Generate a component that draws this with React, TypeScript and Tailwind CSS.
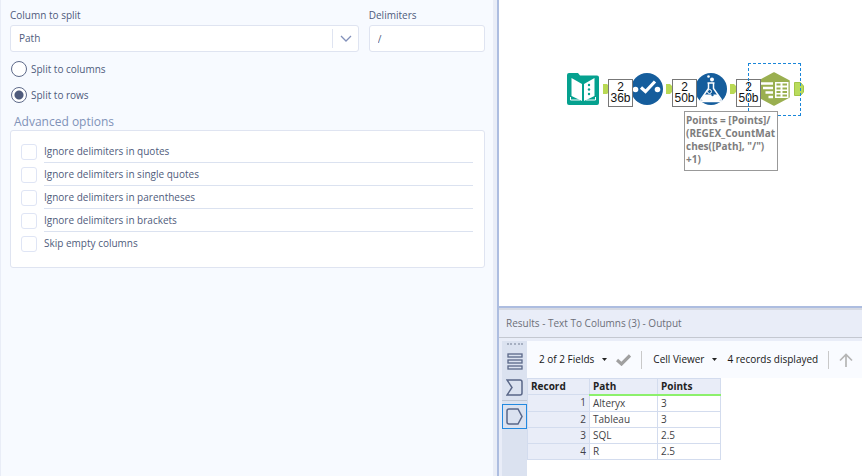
import React, { useState } from "react";

const advancedOptions = [
  "Ignore delimiters in quotes",
  "Ignore delimiters in single quotes",
  "Ignore delimiters in parentheses",
  "Ignore delimiters in brackets",
  "Skip empty columns",
];

const records = [
  { path: "Alteryx", points: "3" },
  { path: "Tableau", points: "3" },
  { path: "SQL", points: "2.5" },
  { path: "R", points: "2.5" },
];

const InputToolIcon = () => (
  <svg width="32" height="32" viewBox="0 0 32 32">
    <path d="M2 0H11L13 2.500H30Q32 2.500 32 4.500V30Q32 32 30 32H2Q0 32 0 30V2Q0 0 2 0Z" fill="#05a18f" />
    <path d="M4.500 5L15 11V28L4.500 23Z" fill="#fff" />
    <path d="M27.500 5L17 11V28L27.500 23Z" fill="#fff" />
    <path d="M3.500 24V27H13M28.500 24V27H19" fill="none" stroke="#fff" strokeWidth="1" />
    <g fill="#05a18f">
      <circle cx="22" cy="12" r="1.200" />
      <circle cx="22" cy="16.500" r="1.200" />
      <circle cx="22" cy="21" r="1.200" />
    </g>
  </svg>
);

const SelectToolIcon = () => (
  <svg width="32" height="32" viewBox="0 0 32 32">
    <circle cx="16" cy="16" r="16" fill="#155d9c" />
    <circle cx="4.500" cy="16.500" r="2.800" fill="#fff" />
    <circle cx="26.500" cy="16.500" r="2.800" fill="#fff" />
    <path d="M10 14.500L14.500 18.500L24 8.500" fill="none" stroke="#fff" strokeWidth="3.200" />
  </svg>
);

const FormulaToolIcon = () => (
  <svg width="32" height="32" viewBox="0 0 32 32">
    <circle cx="16" cy="16" r="16" fill="#155d9c" />
    <path d="M12.500 10H19.500M13.500 10V15.500L6 26Q5 28.500 8 28.500H24Q27 28.500 26 26L18.500 15.500V10" fill="none" stroke="#fff" strokeWidth="1.500" />
    <path d="M9.500 21.500H22.500L25.500 26Q26 28 24 28H8Q6 28 6.500 26Z" fill="#fff" />
    <circle cx="14.500" cy="18.500" r="2" fill="#155d9c" stroke="#fff" strokeWidth="1" />
    <circle cx="17.500" cy="22" r="1.200" fill="#155d9c" />
    <circle cx="13.500" cy="3.500" r="1.300" fill="#fff" />
    <circle cx="17" cy="6.500" r="2" fill="#fff" />
  </svg>
);

const TextToColumnsIcon = () => (
  <svg width="32" height="34" viewBox="0 0 32 34">
    <path d="M16 1L31 9V25L16 33L1 25V9Z" fill="#9aaf50" stroke="#9aaf50" strokeWidth="1.500" strokeLinejoin="round" />
    <path d="M2.500 11.500H15M5 16H15M7.500 20.500H15M10.500 25H15" stroke="#fff" strokeWidth="2.500" />
    <rect x="17" y="10" width="13.500" height="16" fill="#fff" />
    <path d="M18.500 12.500H22.500M24.500 12.500H29M18.500 16.500H22.500M24.500 16.500H29M18.500 20H22.500M24.500 20H29M18.500 23.500H22.500M24.500 23.500H29" stroke="#9aaf50" strokeWidth="2" />
  </svg>
);

const Anchor = ({ className }: { className: string }) => (
  <svg className={`absolute ${className}`} width="6" height="10" viewBox="0 0 6 10">
    <path d="M0 0H4L6 2V8L4 10H0Z" fill="#b9d954" />
  </svg>
);

const Badge = ({ className, size }: { className: string; size: string }) => (
  <div
    className={`absolute flex h-7 w-[25px] flex-col items-center justify-center border border-[#777] bg-white font-['Liberation_Sans',sans-serif] text-xs leading-[11px] text-[#111] ${className}`}
  >
    <span>2</span>
    <span>{size}</span>
  </div>
);

const WorkflowCanvas = () => (
  <div className="relative h-[306px] overflow-hidden bg-white">
    <div className="absolute left-[68px] top-[73px]">
      <InputToolIcon />
    </div>
    <Anchor className="left-[104px] top-[84px]" />
    <div className="absolute left-[132px] top-[73px]">
      <SelectToolIcon />
    </div>
    <Badge className="left-[109px] top-[79px]" size="36b" />
    <Anchor className="left-[167px] top-[84px]" />
    <div className="absolute left-[196px] top-[73px]">
      <FormulaToolIcon />
    </div>
    <Badge className="left-[173px] top-[79px]" size="50b" />
    <Anchor className="left-[231px] top-[84px]" />
    <div className="absolute left-[259px] top-[72px]">
      <TextToColumnsIcon />
    </div>
    <Badge className="left-[237px] top-[79px]" size="50b" />
    <svg className="absolute left-[295px] top-[82px]" width="10" height="14" viewBox="0 0 10 14">
      <path d="M0.500 0.500H6.500L9.500 4V10L6.500 13.500H0.500Z" fill="#b9dc5c" stroke="#a3c447" />
    </svg>
    <div className="absolute left-[249px] top-[63px] h-[53px] w-[53px] border border-dashed border-[#1a86d9]" />
    <div className="absolute left-[185px] top-[111px] h-[60px] w-[94px] border border-[#999] bg-white px-px py-0.5 text-[10px] leading-[13px] font-bold text-[#7d7d7d]">
      Points = [Points]/
      <br />
      (REGEX_CountMat
      <br />
      ches([Path], "/")
      <br />
      +1)
    </div>
  </div>
);

const ConfigPanel = () => {
  const [mode, setMode] = useState("rows");
  const [delimiter, setDelimiter] = useState("/");

  return (
    <section className="min-w-0 border-r-4 border-l border-[#e9edf7] bg-[#f7faff] pt-2 pr-2 pl-[9px] text-[#4f5b7c]">
      <div className="flex gap-[10px]">
        <div className="min-w-0 grow-[3] basis-0">
          <label htmlFor="column" className="block leading-[14px]">
            Column to split
          </label>
          <div className="relative mt-[3px]">
            <select
              id="column"
              className="block h-[27px] w-full appearance-none rounded-[3px] border border-[#dfe4f1] bg-white px-2"
            >
              <option>Path</option>
            </select>
            <div className="pointer-events-none absolute inset-y-1 right-0 flex w-[27px] items-center justify-center border-l border-[#dfe4f1]">
              <svg width="12" height="8" viewBox="0 0 12 8" fill="none" stroke="#8290ba" strokeWidth="1.300">
                <path d="M1 1L6 6L11 1" />
              </svg>
            </div>
          </div>
        </div>
        <div className="min-w-0 grow basis-0">
          <label htmlFor="delimiters" className="block leading-[14px]">
            Delimiters
          </label>
          <input
            id="delimiters"
            value={delimiter}
            onChange={(e) => setDelimiter(e.target.value)}
            className="mt-[3px] block h-[27px] w-full rounded-[3px] border border-[#dfe4f1] bg-white px-2"
          />
        </div>
      </div>

      <div className="mt-[9px] flex flex-col gap-[10px] pl-px">
        {["columns", "rows"].map((value) => (
          <label key={value} className="flex h-4 items-center gap-1">
            <input
              type="radio"
              name="mode"
              checked={mode === value}
              onChange={() => setMode(value)}
              className="size-4 appearance-none rounded-full border border-[#5e6a8a] bg-white checked:bg-[radial-gradient(circle,#4f5b7c_4px,white_5px)]"
            />
            Split to {value}
          </label>
        ))}
      </div>

      <h2 className="mt-[11px] pl-1 text-xs leading-4 text-[#7f92b8]">Advanced options</h2>
      <div className="h-[138px] rounded-[3px] border border-[#dfe4f1] bg-white pt-[9px] pr-[11px] pl-[10px]">
        {advancedOptions.map((option) => (
          <label key={option} className="group flex h-[23px] items-center gap-[7px]">
            <input type="checkbox" className="size-4 shrink-0 appearance-none rounded-[3px] border border-[#dfe5f5] bg-white checked:bg-[#4f5b7c]" />
            <span className="flex h-full grow items-center border-b border-[#dbe2f0] group-last:border-transparent">{option}</span>
          </label>
        ))}
      </div>
    </section>
  );
};

const ResultsPanel = () => (
  <section className="flex grow flex-col border-t-2 border-[#adbde0] bg-white">
    <h2 className="flex h-[30px] items-center border-t-2 border-b border-t-[#d5d9e3] border-b-[#c4c8d1] bg-[#e9edf8] pl-[7px] text-[#6c6f78]">
      Results - Text To Columns (3) - Output
    </h2>
    <div className="flex grow border-t-[3px] border-[#e9edf8]">
      <div className="flex shrink-0 bg-[#e9edf8] pl-[3px]">
        <div className="flex w-[25px] flex-col items-center bg-[#dbe2f0]">
          <div className="mt-0.5 mb-2 w-4 border-t-2 border-dotted border-[#a6afc1]" />
          <button aria-label="Messages" className="flex h-[18px] items-center">
            <svg width="16" height="18" viewBox="0 0 16 18" fill="none" stroke="#5a6788" strokeWidth="1.300">
              <rect x="1" y="1" width="14" height="3" />
              <rect x="1" y="7" width="14" height="3" />
              <rect x="1" y="13" width="14" height="3" />
            </svg>
          </button>
          <button aria-label="Input" className="mt-[7px] flex h-[18px] items-center">
            <svg width="17" height="17" viewBox="0 0 17 17" fill="none" stroke="#5a6788" strokeWidth="1.500">
              <path d="M1 1H14Q16 1 16 3V14Q16 16 14 16H1L6 8.500Z" />
            </svg>
          </button>
          <div className="mt-1 h-px w-full bg-[#bfc6d3]" />
          <button aria-label="Output" className="mt-[3px] flex h-[25px] w-[25px] items-center justify-center border border-[#2389e0]">
            <svg width="17" height="17" viewBox="0 0 17 17" fill="none" stroke="#5a6788" strokeWidth="1.500">
              <path d="M3 1H12L16 8.500L12 16H3Q1 16 1 14V3Q1 1 3 1Z" />
            </svg>
          </button>
        </div>
      </div>
      <div className="min-w-0 grow">
        <div className="flex h-[37px] items-center overflow-hidden bg-[#f9fbff] pl-3 whitespace-nowrap text-[#171717]">
          <button className="flex items-center gap-2">
            2 of 2 Fields
            <svg width="5" height="3" viewBox="0 0 5 3">
              <path d="M0 0H5L2.500 3Z" fill="#222" />
            </svg>
          </button>
          <button aria-label="Apply" className="ml-[9px]">
            <svg width="15" height="12" viewBox="0 0 15 12">
              <path d="M1 6L5.500 10L14 1.500" fill="none" stroke="#a0a0a0" strokeWidth="3.200" />
            </svg>
          </button>
          <div className="ml-[10px] h-[18px] w-px shrink-0 bg-[#c9c9c9]" />
          <button className="ml-[11px] flex items-center gap-2">
            Cell Viewer
            <svg width="5" height="3" viewBox="0 0 5 3">
              <path d="M0 0H5L2.500 3Z" fill="#222" />
            </svg>
          </button>
          <span className="ml-[10px]">4 records displayed</span>
          <div className="ml-[10px] h-[18px] w-px shrink-0 bg-[#c9c9c9]" />
          <button aria-label="Previous" className="ml-[10px]">
            <svg width="14" height="14" viewBox="0 0 14 14" fill="none" stroke="#b5b5b5" strokeWidth="1.700">
              <path d="M7 14V1.500M1 7.500L7 1.500L13 7.500" />
            </svg>
          </button>
        </div>
        <table className="w-[194px] table-fixed border-collapse text-[#222]">
          <thead>
            <tr className="h-4 bg-[#e9edf8] text-left leading-[13px]">
              <th className="w-[62px] border border-[#d3dcee] p-0 pl-[3px]">Record</th>
              <th className="w-[68px] border border-b-2 border-[#d3dcee] border-b-[#8cf06c] p-0 pl-[3px]">Path</th>
              <th className="border border-b-2 border-[#d3dcee] border-b-[#8cf06c] p-0 pl-[3px]">Points</th>
            </tr>
          </thead>
          <tbody>
            {records.map((record, i) => (
              <tr key={i} className="h-4 leading-[15px] text-[#3f3f46]">
                <td className="border border-[#d3dcee] bg-[#e9edf8] p-0 pr-[3px] text-right">{i + 1}</td>
                <td className="border border-[#d3dcee] p-0 pl-[3px]">{record.path}</td>
                <td className="border border-[#d3dcee] p-0 pl-[3px]">{record.points}</td>
              </tr>
            ))}
          </tbody>
        </table>
      </div>
    </div>
  </section>
);

const App = () => {
  return (
    <div className="grid min-h-screen grid-cols-[497fr_365fr] bg-white font-['Open_Sans',sans-serif] text-[10px]">
      <ConfigPanel />
      <main className="flex min-w-0 flex-col border-l-2 border-[#adbde0]">
        <WorkflowCanvas />
        <ResultsPanel />
      </main>
    </div>
  );
};

export default App;
